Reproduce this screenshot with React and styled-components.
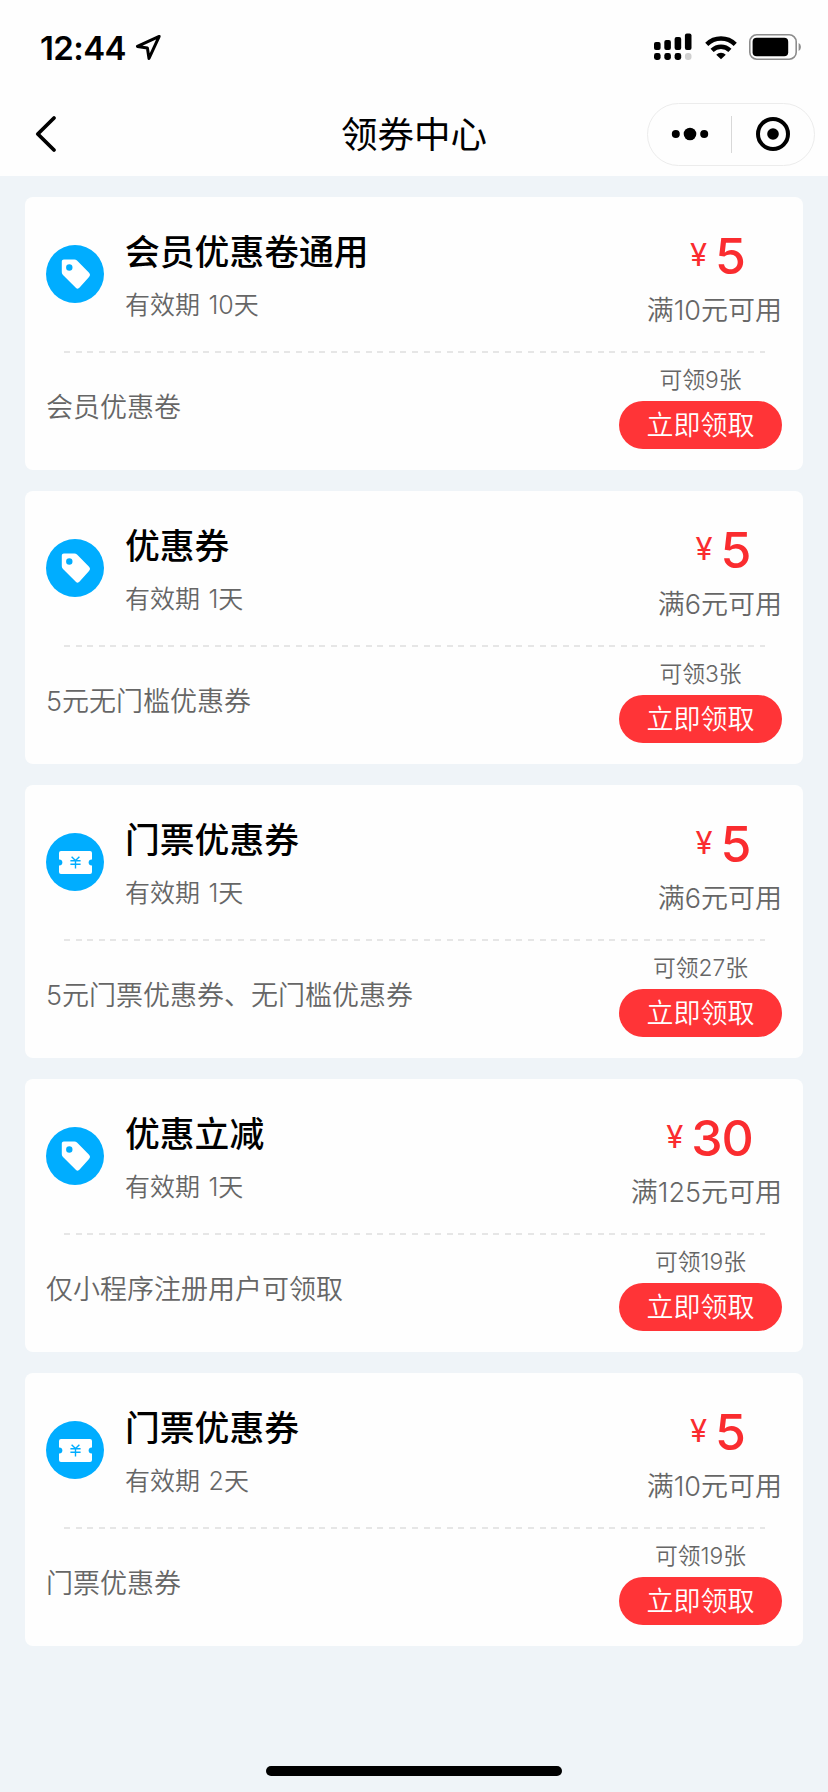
import React from "react";
import styled, { createGlobalStyle } from "styled-components";

const GlobalStyle = createGlobalStyle`
  * { box-sizing: border-box; }
  body {
    margin: 0;
    background: #eff4f8;
    font-family: Inter, "Noto Sans CJK SC", sans-serif;
    color: #000;
  }
`;

const Page = styled.div`
  width: 828px;
  height: 1792px;
  display: flex;
  flex-direction: column;
  background: #eff4f8;
  overflow: hidden;
`;

const Header = styled.header`
  height: 176px;
  background: #fefefe;
  display: flex;
  flex-direction: column;
`;

const StatusBar = styled.div`
  height: 94px;
  padding: 0 26px 0 40px;
  display: flex;
  align-items: center;
  justify-content: space-between;
`;

const StatusGroup = styled.div`
  display: flex;
  align-items: center;
  gap: ${(p) => p.$gap}px;
`;

const Clock = styled.span`
  font-size: 33px;
  line-height: 40px;
  padding-top: 1px;
  font-weight: 600;
  letter-spacing: -0.6px;
`;

const NavBar = styled.nav`
  height: 80px;
  display: grid;
  grid-template-columns: 182px 1fr 182px;
  align-items: center;
`;

const BackButton = styled.button`
  border: 0;
  background: none;
  padding: 0 0 0 34px;
  display: flex;
`;

const PageTitle = styled.h1`
  margin: 0;
  padding-top: 2px;
  font-size: 36.5px;
  line-height: 50px;
  font-weight: 400;
  text-align: center;
`;

const Capsule = styled.div`
  width: 168px;
  height: 63px;
  margin-left: 0.5px;
  border: 1.5px solid #ececec;
  border-radius: 32px;
  display: grid;
  grid-template-columns: 83px 1px 1fr;
  align-items: center;
  justify-items: center;
`;

const CapsuleDivider = styled.span`
  width: 1px;
  height: 37px;
  background: #d8d8d8;
`;

const CouponList = styled.main`
  flex: 1;
  padding: 21px 25px 0;
  display: flex;
  flex-direction: column;
  gap: 21px;
`;

const Card = styled.article`
  height: 273px;
  border-radius: 8px;
  background: #fefefe;
  padding: 0 21px;
  display: flex;
  flex-direction: column;
`;

const CardTop = styled.div`
  height: 154px;
  display: flex;
  align-items: center;
`;

const Badge = styled.div`
  width: 58px;
  height: 58px;
  border-radius: 50%;
  background: #00adff;
  display: flex;
  align-items: center;
  justify-content: center;
`;

const Info = styled.div`
  flex: 1;
  height: 100%;
  padding: 30px 0 0 21px;
`;

const Name = styled.h2`
  margin: 0;
  font-size: 34.8px;
  line-height: 50px;
  font-weight: 500;
`;

const Validity = styled.p`
  margin: 8px 0 0;
  font-size: 25px;
  line-height: 40px;
  font-weight: 350;
  word-spacing: 1.5px;
  color: #666;
`;

const Value = styled.div`
  height: 100%;
  padding-top: 29px;
  display: flex;
  flex-direction: column;
  align-items: center;
`;

const Price = styled.div`
  height: 60px;
  display: flex;
  align-items: baseline;
  gap: 8px;
  padding-left: 6px;
  line-height: 60px;
  color: #fa2c2f;
`;

const Currency = styled.span`
  font-size: 31px;
  font-weight: 400;
  position: relative;
  top: -8px;
`;

const Amount = styled.span`
  font-size: 50px;
  font-weight: 500;
  letter-spacing: -1.2px;
`;

const Condition = styled.p`
  margin: 5px 0 0;
  font-size: 27px;
  line-height: 40px;
  font-weight: 350;
  color: #666;
`;

const Perforation = styled.div`
  height: 2px;
  margin: 0 17px 0 18px;
  background: repeating-linear-gradient(90deg, #e6e6e6 0 6px, transparent 6px 11.6px);
`;

const CardBottom = styled.div`
  flex: 1;
  display: flex;
  justify-content: space-between;
`;

const Description = styled.p`
  margin: 35px 0 0;
  font-size: 27px;
  line-height: 40px;
  font-weight: 350;
  color: #666;
`;

const Claim = styled.div`
  width: 163px;
  padding-top: 12px;
  display: flex;
  flex-direction: column;
  align-items: center;
`;

const Remaining = styled.span`
  font-size: 22.8px;
  line-height: 30px;
  font-weight: 350;
  color: #666;
`;

const ClaimButton = styled.button`
  width: 163px;
  height: 48px;
  margin-top: 6px;
  padding: 0;
  border: 0;
  border-radius: 24px;
  background: #ff3437;
  color: #fff;
  font-family: inherit;
  font-size: 27px;
  line-height: 47px;
  font-weight: 350;
`;

const HomeIndicator = styled.div`
  width: 296px;
  height: 10px;
  margin: 0 auto 16px;
  border-radius: 5px;
  background: #000;
`;

const LocationIcon = () => (
  <svg width="27" height="27" viewBox="0 0 27 27" fill="none" stroke="#000" strokeWidth="3" strokeLinejoin="round">
    <path d="M24.2 2.4 2.4 12.4 12.4 14 14 24.4Z" />
  </svg>
);

const SignalIcon = () => (
  <svg width="38" height="28" viewBox="0 0 38 28">
    <rect x="0" y="9" width="6.6" height="8" rx="2" />
    <rect x="10.3" y="7" width="6.6" height="10" rx="2" />
    <rect x="20.6" y="4" width="6.6" height="13" rx="2" />
    <rect x="30.9" y="0.5" width="6.6" height="16.5" rx="2" />
    <rect x="0" y="20" width="6.6" height="7" rx="2.4" />
    <rect x="10.3" y="20" width="6.6" height="7" rx="2.4" />
    <rect x="20.6" y="20" width="6.6" height="7" rx="2.4" />
    <rect x="30.9" y="20" width="6.6" height="7" rx="3" fill="#cfcfcf" />
  </svg>
);

const WifiIcon = () => (
  <svg width="32" height="25" viewBox="0 0 33 25" fill="none" stroke="#000" strokeWidth="4.6">
    <path d="M1.8 9.3a21 21 0 0 1 29.4 0" />
    <path d="M7.3 15.4a13.2 13.2 0 0 1 18.4 0" />
    <path d="M16.5 24.6 11.6 19.9a6.8 6.8 0 0 1 9.8 0Z" fill="#000" stroke="none" />
  </svg>
);

const BatteryIcon = () => (
  <svg width="53" height="26" viewBox="0 0 53 26">
    <rect x="0.8" y="0.8" width="46.4" height="24.4" rx="7" fill="none" stroke="#8c8c8c" strokeWidth="1.6" />
    <rect x="3.6" y="3.8" width="35.6" height="18.4" rx="4" />
    <path d="M49.6 9c3 1.2 3 6.8 0 8Z" fill="#8c8c8c" />
  </svg>
);

const BackIcon = () => (
  <svg width="24" height="38" viewBox="0 0 24 38" fill="none" stroke="#000" strokeWidth="3.8" strokeLinecap="round" strokeLinejoin="round">
    <path d="M20 3 3.8 19 20 35" />
  </svg>
);

const MoreIcon = () => (
  <svg width="38" height="14" viewBox="0 0 38 14" overflow="visible">
    <circle cx="5.8" cy="7" r="4" />
    <circle cx="20" cy="7" r="6.3" />
    <circle cx="34.2" cy="7" r="4" />
  </svg>
);

const CloseIcon = () => (
  <svg width="34" height="34" viewBox="0 0 34 34">
    <circle cx="17" cy="17" r="15" fill="none" stroke="#000" strokeWidth="4" />
    <circle cx="17" cy="17" r="5.8" />
  </svg>
);

const TagIcon = () => (
  <svg width="32" height="32" viewBox="0 0 32 32">
    <path
      fill="#fff"
      fillRule="evenodd"
      d="M4.8 1.6h10.6a4 4 0 0 1 2.6 1L29.8 14.4a3.4 3.4 0 0 1 0 4.8L20.6 29.6a2.6 2.6 0 0 1-3.8.1L4 17a4 4 0 0 1-1.2-2.8V3.6c0-1.1.9-2 2-2ZM10.3 6.3a3.2 3.2 0 1 0 0 6.4 3.2 3.2 0 0 0 0-6.4Z"
    />
  </svg>
);

const TicketIcon = () => (
  <svg width="33" height="23" viewBox="0 0 33 23">
    <path
      fill="#fff"
      d="M2 0h29a2 2 0 0 1 2 2v6.6a3.2 3.2 0 0 0-3.4 3 3.2 3.2 0 0 0 3.4 3V21a2 2 0 0 1-2 2H2a2 2 0 0 1-2-2v-6.4a3.2 3.2 0 0 0 3.4-3A3.2 3.2 0 0 0 0 8.6V2a2 2 0 0 1 2-2Z"
    />
    <path
      fill="none"
      stroke="#00adff"
      strokeWidth="1.4"
      d="M12.6 5.8 16.5 9.6 20.4 5.8M11.4 9.8h10.2M11.4 13.2h10.2M16.5 9.8v7.6"
    />
  </svg>
);

const coupons = [
  { icon: "tag", name: "会员优惠卷通用", days: 10, amount: 5, min: 10, left: 9, note: "会员优惠卷" },
  { icon: "tag", name: "优惠券", days: 1, amount: 5, min: 6, left: 3, note: "5元无门槛优惠券" },
  { icon: "ticket", name: "门票优惠券", days: 1, amount: 5, min: 6, left: 27, note: "5元门票优惠券、无门槛优惠券" },
  { icon: "tag", name: "优惠立减", days: 1, amount: 30, min: 125, left: 19, note: "仅小程序注册用户可领取" },
  { icon: "ticket", name: "门票优惠券", days: 2, amount: 5, min: 10, left: 19, note: "门票优惠券" },
];

const Coupon = ({ icon, name, days, amount, min, left, note }) => (
  <Card>
    <CardTop>
      <Badge>{icon === "tag" ? <TagIcon /> : <TicketIcon />}</Badge>
      <Info>
        <Name>{name}</Name>
        <Validity>{`有效期 ${days}天`}</Validity>
      </Info>
      <Value>
        <Price>
          <Currency>¥</Currency>
          <Amount>{amount}</Amount>
        </Price>
        <Condition>{`满${min}元可用`}</Condition>
      </Value>
    </CardTop>
    <Perforation />
    <CardBottom>
      <Description>{note}</Description>
      <Claim>
        <Remaining>{`可领${left}张`}</Remaining>
        <ClaimButton>立即领取</ClaimButton>
      </Claim>
    </CardBottom>
  </Card>
);

export default function App() {
  return (
    <Page>
      <GlobalStyle />
      <Header>
        <StatusBar>
          <StatusGroup $gap={9}>
            <Clock>12:44</Clock>
            <LocationIcon />
          </StatusGroup>
          <StatusGroup $gap={12.5}>
            <SignalIcon />
            <WifiIcon />
            <BatteryIcon />
          </StatusGroup>
        </StatusBar>
        <NavBar>
          <BackButton aria-label="返回">
            <BackIcon />
          </BackButton>
          <PageTitle>领券中心</PageTitle>
          <Capsule>
            <MoreIcon />
            <CapsuleDivider />
            <CloseIcon />
          </Capsule>
        </NavBar>
      </Header>
      <CouponList>
        {coupons.map((c, i) => (
          <Coupon key={i} {...c} />
        ))}
      </CouponList>
      <HomeIndicator />
    </Page>
  );
}
